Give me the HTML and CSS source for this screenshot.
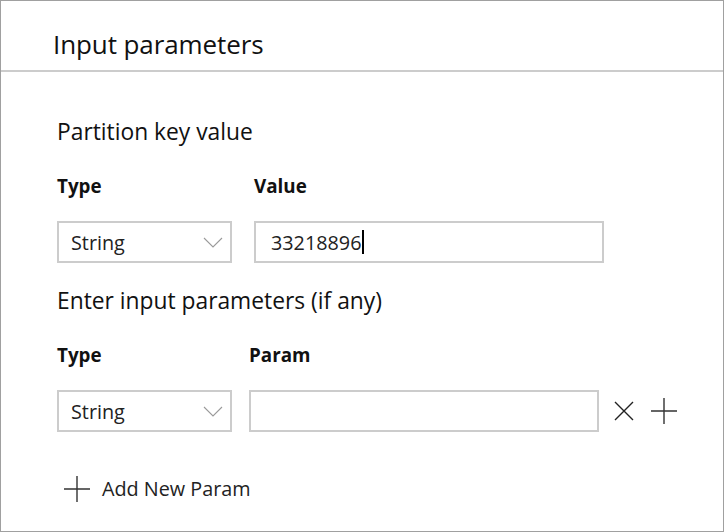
FILE: index.html
```html
<!DOCTYPE html>
<html>
<head>
<meta charset="utf-8">
<link rel="stylesheet" href="styles.css">
</head>
<body>
<div class="panel">
  <div class="header"><h1 class="title">Input parameters</h1></div>
  <div class="content">
    <h2 class="section">Partition key value</h2>
    <div class="row labels">
      <div class="label col-type">Type</div>
      <div class="label">Value</div>
    </div>
    <div class="row fields">
      <div class="select col-type">
        <span>String</span>
        <svg class="chev" width="20" height="11" viewBox="0 0 20 11"><polyline points="1,1 10,10 19,1" fill="none" stroke="#9a9a9a" stroke-width="1.1"/></svg>
      </div>
      <div class="input value-input"><span>33218896</span><span class="caret"></span></div>
    </div>
    <h2 class="section section2">Enter input parameters (if any)</h2>
    <div class="row labels">
      <div class="label col-type2">Type</div>
      <div class="label">Param</div>
    </div>
    <div class="row fields">
      <div class="select col-type2">
        <span>String</span>
        <svg class="chev" width="20" height="11" viewBox="0 0 20 11"><polyline points="1,1 10,10 19,1" fill="none" stroke="#9a9a9a" stroke-width="1.1"/></svg>
      </div>
      <div class="input param-input"></div>
      <svg class="icon-x" width="20" height="20" viewBox="0 0 20 20"><path d="M1 1 L19 19 M19 1 L1 19" stroke="#222" stroke-width="1.4" fill="none"/></svg>
      <svg class="icon-plus" width="26" height="26" viewBox="0 0 26 26"><path d="M13 0 V26 M0 13 H26" stroke="#333" stroke-width="1.4" fill="none"/></svg>
    </div>
    <div class="add">
      <svg class="add-plus" width="26" height="26" viewBox="0 0 26 26"><path d="M13 0 V26 M0 13 H26" stroke="#333" stroke-width="1.4" fill="none"/></svg>
      <span>Add New Param</span>
    </div>
  </div>
</div>
</body>
</html>
```
FILE: styles.css
```css
html, body { margin: 0; padding: 0; background: #fff; }
body { font-family: "Open Sans", "Noto Sans", sans-serif; color: #111; }
.panel {
  width: 724px; height: 532px; box-sizing: border-box;
  border: 1px solid #a0a0a0;
  display: flex; flex-direction: column;
}
.header {
  height: 69px; border-bottom: 2px solid #cccccc;
  display: flex; align-items: flex-start;
  padding-left: 52px; box-sizing: content-box;
}
.title { margin: 25px 0 0; font-size: 26px; font-weight: 400; line-height: 36px; letter-spacing: -0.1px; }
.content { padding-left: 56px; display: flex; flex-direction: column; }
.section { margin: 45px 0 0; font-size: 22.8px; font-weight: 400; line-height: 30px; }
.section2 { margin-top: 23px; }
.row { display: flex; align-items: center; }
.labels { margin-top: 27px; height: 24px; }
.label { font-size: 18.8px; font-weight: 700; line-height: 24px; }
.col-type { width: 197px; }
.col-type2 { width: 192px; }
.fields { margin-top: 23px; }
.select {
  box-sizing: border-box; height: 42px; width: 175px; flex: none;
  border: 2px solid #cccccc; display: flex; align-items: center; justify-content: space-between;
  padding: 0 7px 0 12px; font-size: 19.8px; color: #222;
}
.select.col-type { margin-right: 22px; }
.select.col-type2 { margin-right: 17px; }
.chev { margin-top: 1px; }
.input {
  box-sizing: border-box; height: 42px; border: 2px solid #cccccc;
  display: flex; align-items: center; padding-left: 15px; font-size: 19.8px; color: #222;
}
.value-input { width: 350px; }
.param-input { width: 350px; }
.caret { display: inline-block; width: 2px; height: 24px; background: #000; margin-left: 1px; }
.icon-x { margin-left: 15px; }
.icon-plus { margin-left: 17px; }
.add { display: flex; align-items: center; margin-top: 43px; margin-left: 7px; font-size: 19.8px; color: #222; }
.add span { margin-left: 12px; }
```
